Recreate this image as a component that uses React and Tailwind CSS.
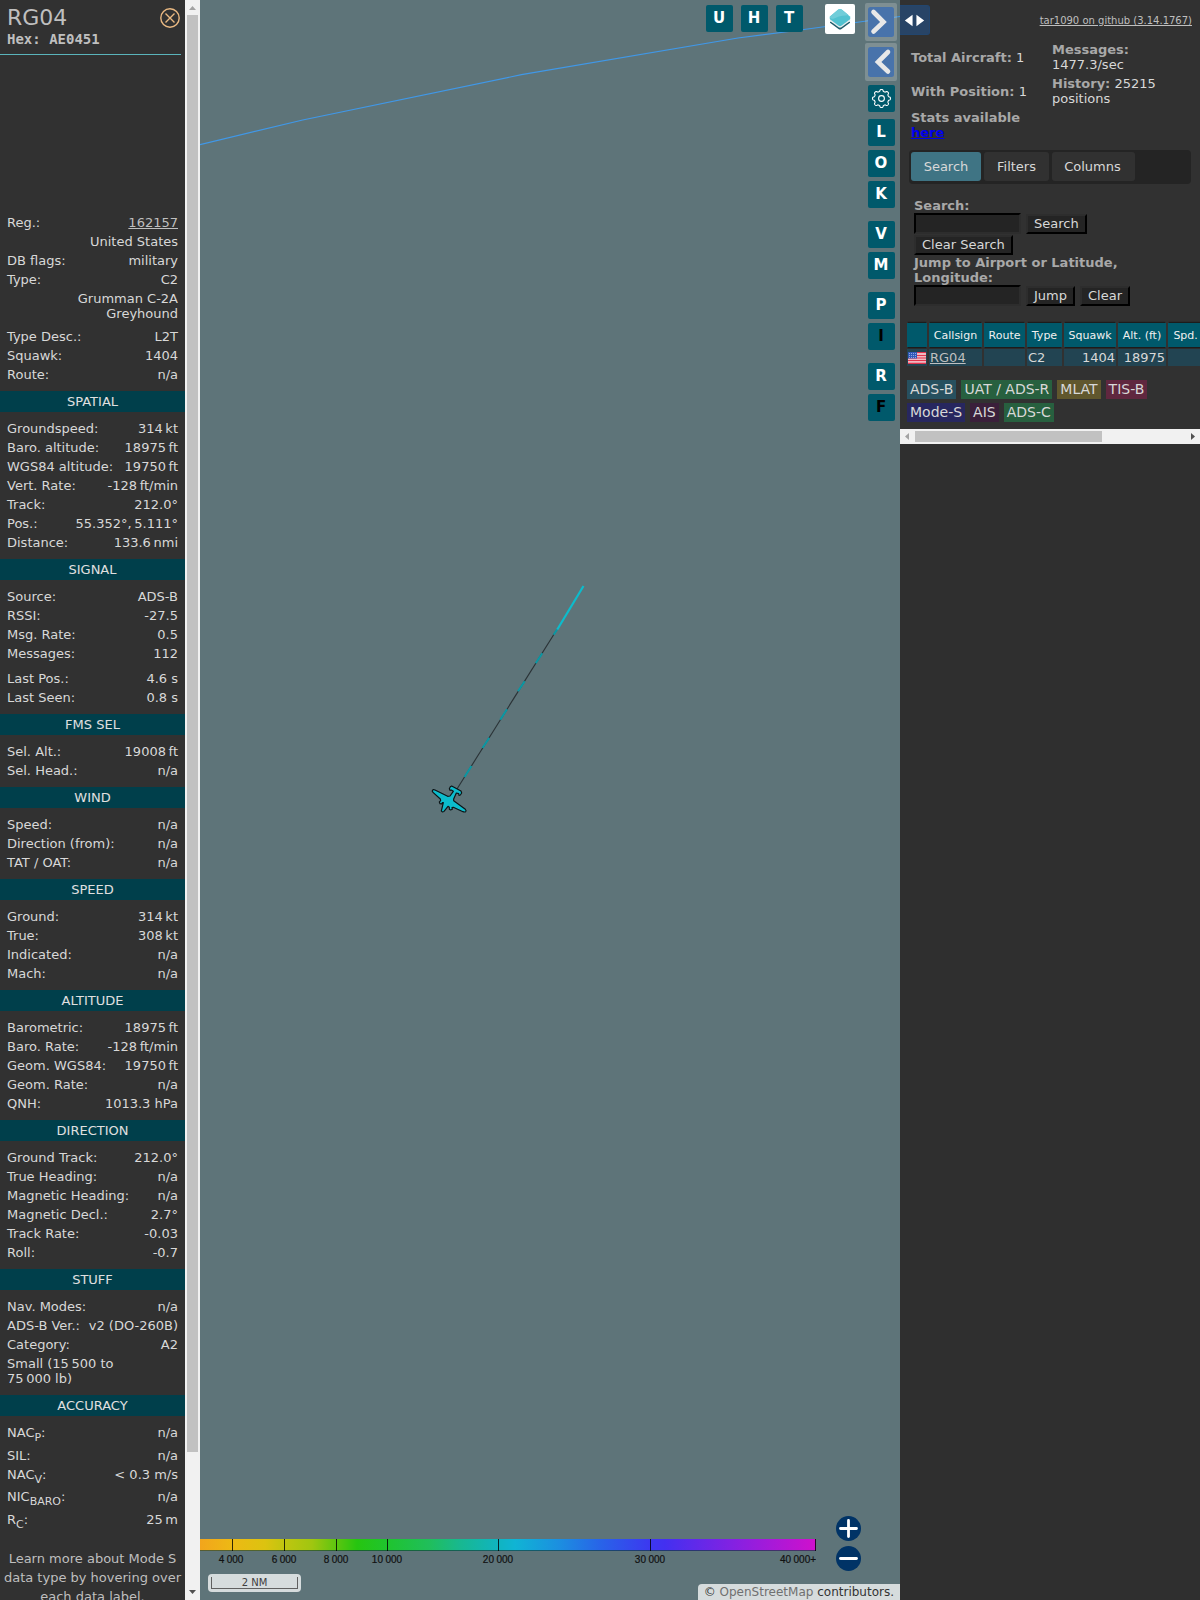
import React from "react";

const N = "\u202f";

const SUMMARY = [
  { label: "Reg.:", value: "162157", link: true },
  { label: "", value: "United States" },
  { label: "DB flags:", value: "military" },
  { label: "Type:", value: "C2" },
  { label: "", value: "Grumman C-2A Greyhound", wide: true },
  { label: "Type Desc.:", value: "L2T" },
  { label: "Squawk:", value: "1404" },
  { label: "Route:", value: "n/a" },
];

const SECTIONS = [
  ["SPATIAL", [
    ["Groundspeed:", `314${N}kt`],
    ["Baro. altitude:", `18975${N}ft`],
    ["WGS84 altitude:", `19750${N}ft`],
    ["Vert. Rate:", `-128${N}ft/min`],
    ["Track:", "212.0°"],
    ["Pos.:", `55.352°,${N}5.111°`],
    ["Distance:", `133.6${N}nmi`],
  ]],
  ["SIGNAL", [
    ["Source:", "ADS-B"],
    ["RSSI:", "-27.5"],
    ["Msg. Rate:", "0.5"],
    ["Messages:", "112"],
    null,
    ["Last Pos.:", "4.6 s"],
    ["Last Seen:", "0.8 s"],
  ]],
  ["FMS SEL", [
    ["Sel. Alt.:", `19008${N}ft`],
    ["Sel. Head.:", "n/a"],
  ]],
  ["WIND", [
    ["Speed:", "n/a"],
    ["Direction (from):", "n/a"],
    ["TAT / OAT:", "n/a"],
  ]],
  ["SPEED", [
    ["Ground:", `314${N}kt`],
    ["True:", `308${N}kt`],
    ["Indicated:", "n/a"],
    ["Mach:", "n/a"],
  ]],
  ["ALTITUDE", [
    ["Barometric:", `18975${N}ft`],
    ["Baro. Rate:", `-128${N}ft/min`],
    ["Geom. WGS84:", `19750${N}ft`],
    ["Geom. Rate:", "n/a"],
    ["QNH:", "1013.3 hPa"],
  ]],
  ["DIRECTION", [
    ["Ground Track:", "212.0°"],
    ["True Heading:", "n/a"],
    ["Magnetic Heading:", "n/a"],
    ["Magnetic Decl.:", "2.7°"],
    ["Track Rate:", "-0.03"],
    ["Roll:", "-0.7"],
  ]],
  ["STUFF", [
    ["Nav. Modes:", "n/a"],
    ["ADS-B Ver.:", "v2 (DO-260B)"],
    ["Category:", "A2"],
    [`Small (15${N}500 to 75${N}000 lb)`, ""],
  ]],
];

const ACCURACY = [
  ["NAC", "P", "n/a", "h-[23px]"],
  ["SIL", "", "n/a", "h-[19px]"],
  ["NAC", "V", "< 0.3 m/s", "h-[22px]"],
  ["NIC", "BARO", "n/a", "h-[23px]"],
  ["R", "C", `25${N}m`, "h-[23px]"],
];

function Section({ title, children }) {
  return (
    <section>
      <h2 className="h-[21px] bg-[#003f4b] text-center leading-[21px] text-[#e0e0e0]">{title}</h2>
      <div className="px-[7px] py-[7px]">{children}</div>
    </section>
  );
}

function Row({ label, value }) {
  return (
    <div className="flex justify-between py-[2px] leading-[15px]">
      <span className={value ? "whitespace-nowrap" : "w-[120px]"}>{label}</span>
      {value && <span className="whitespace-nowrap text-right">{value}</span>}
    </div>
  );
}

function AircraftPanel() {
  return (
    <aside className="flex w-[200px] shrink-0 text-[13px] text-[#d8d8d8]">
      <div className="flex min-w-0 flex-1 flex-col overflow-hidden bg-[#313131]">
        <header className="mr-1 flex h-[55px] shrink-0 justify-between border-b border-[#5ab4bb] pl-[7px] pr-px text-[#bfbfbf]">
          <div className="pt-1">
            <h1 className="text-[22px] leading-[28px]">RG04</h1>
            <div className="font-['DejaVu_Sans_Mono',monospace] text-sm font-bold leading-[14px]">Hex: AE0451</div>
          </div>
          <button aria-label="Close" className="mt-2 h-5 w-5">
            <svg viewBox="0 0 20 20" className="h-5 w-5" fill="none" stroke="#eab982" strokeWidth="1.4">
              <circle cx="10" cy="10" r="9.2" />
              <path d="M5.5 5.5l9 9M14.5 5.5l-9 9" />
            </svg>
          </button>
        </header>
        <div className="px-[7px] pb-[7px] pt-[158px]">
          {SUMMARY.map((r) => (
            <div key={r.value} className={r.wide ? "mb-1 flex justify-end py-[2px] leading-[15px]" : "flex justify-between py-[2px] leading-[15px]"}>
              <span>{r.label}</span>
              {r.link ? (
                <a href="#reg" className="underline text-[#bfbfbf]">{r.value}</a>
              ) : (
                <span className={r.wide ? "w-[110px] text-right" : ""}>{r.value}</span>
              )}
            </div>
          ))}
        </div>
        {SECTIONS.map(([title, rows]) => (
          <Section key={title} title={title}>
            {rows.map((r, i) => (r ? <Row key={i} label={r[0]} value={r[1]} /> : <div key={i} className="h-[6px]" />))}
          </Section>
        ))}
        <Section title="ACCURACY">
          {ACCURACY.map(([name, sub, value, height]) => (
            <div key={name + sub} className={`flex justify-between py-[2px] leading-[15px] ${height}`}>
              <span>
                {name}
                {sub && <sub className="-bottom-1 text-[11px]">{sub}</sub>}:
              </span>
              <span>{value}</span>
            </div>
          ))}
        </Section>
        <p className="mt-[9px] whitespace-nowrap text-center leading-[19px] text-[#bfbfbf]">
          Learn more about Mode S<br />data type by hovering over<br />each data label.
        </p>
      </div>
      <div className="flex w-[15px] flex-col items-center bg-[#f1f1f1]">
        <svg viewBox="0 0 15 15" className="h-[15px] w-[15px]"><path d="M4 10h7L7.500 6z" fill="#a3a3a3" /></svg>
        <div className="w-[11px] flex-1 pb-[133px]"><div className="h-full bg-[#c1c1c1]" /></div>
        <svg viewBox="0 0 15 15" className="h-[15px] w-[15px]"><path d="M4 5h7L7.500 9z" fill="#505050" /></svg>
      </div>
    </aside>
  );
}

function LetterButton({ children, dark }) {
  return (
    <button className={`flex h-[27px] w-[27px] items-center justify-center rounded-[2px] bg-[#00596b] pr-px text-[15px] font-bold leading-none ${dark ? "text-black" : "text-white"}`}>
      {children}
    </button>
  );
}

function ToggleButton({ label, d }) {
  return (
    <button aria-label={label} className="flex h-[38px] w-8 items-center justify-center rounded-[2px] bg-white/20">
      <svg viewBox="0 0 26 30" className="h-[30px] w-[26px]">
        <rect width="26" height="30" rx="2.500" fill="#4873ab" />
        <path d={d} fill="none" stroke="#e8e8e8" strokeWidth="4.600" strokeLinecap="round" />
      </svg>
    </button>
  );
}

const gearPath = (() => {
  const pts = [];
  for (let i = 0; i <= 160; i++) {
    const a = (i / 160) * Math.PI * 2;
    const r = 8.1 + 0.9 * Math.tanh(2.2 * Math.cos(8 * a));
    pts.push(`${(13.5 + r * Math.sin(a)).toFixed(2)} ${(13.5 - r * Math.cos(a)).toFixed(2)}`);
  }
  return `M${pts.join("L")}Z`;
})();

const GROUPS = [["L", "O", "K"], ["V", "M"], ["P", "I"], ["R", "F"]];

const TICKS = [
  [32, "4\u2005000", 31],
  [84, "6\u2005000", 84],
  [136, "8\u2005000", 136],
  [187, "10\u2005000", 187],
  [298, "20\u2005000", 298],
  [450, "30\u2005000", 450],
  [615, "40\u2005000+", 598],
];

const STOPS = [
  [0, "#f2a51c"], [32, "#edb914"], [65, "#dcc310"], [84, "#c0c510"], [112, "#a0c610"], [136, "#5ec510"],
  [157, "#26c510"], [187, "#1fc42e"], [230, "#20be5c"], [260, "#18b890"], [298, "#10b4c0"], [315, "#10b4d4"],
  [360, "#1c8ee0"], [400, "#2864e8"], [450, "#3c38f0"], [465, "#4330f0"], [540, "#8a20e0"], [616, "#d010cc"],
];

function Legend() {
  return (
    <svg viewBox="0 0 616 28" className="h-7 w-[616px]" role="img" aria-label="Altitude legend">
      <defs>
        <linearGradient id="alt">
          {STOPS.map(([x, c]) => <stop key={x} offset={x / 616} stopColor={c} />)}
        </linearGradient>
      </defs>
      <rect width="616" height="12" fill="url(#alt)" />
      <path d="M0 11.500H616" stroke="#143c3c" strokeOpacity=".7" />
      {TICKS.map(([x, label, tx]) => (
        <g key={x}>
          <path d={`M${x + 0.5} 0V12`} stroke="#000" strokeOpacity=".8" />
          <text x={tx} y="24" textAnchor="middle" fontSize="10" fontFamily="Liberation Sans, sans-serif" fill="#111" stroke="#111" strokeWidth=".2">{label}</text>
        </g>
      ))}
    </svg>
  );
}

const DASHES = [[557.3, 629.3, 553.7, 634.7], [542.3, 653.3, 535.7, 663.3], [524.7, 681.3, 518, 691.3], [507, 709.3, 500.300, 719.7], [489.3, 737.7, 482.5, 748], [471.500, 766, 464.5, 777]];

function MapView() {
  return (
    <main className="relative min-w-0 flex-1 overflow-hidden bg-[#5e7479]">
      <svg viewBox="200 0 700 1600" className="absolute left-0 top-0 h-[1600px] w-[700px]" fill="none">
        <path d="M200 144.700L302.700 120L521.500 74.700L738 38L789 31.500L900 16.500" stroke="#4098e8" strokeWidth="1.200" />
        <path d="M556 631L457 789" stroke="#2a3236" strokeWidth="1.100" />
        {DASHES.map(([a, b, c, d]) => <path key={a} d={`M${a} ${b}L${c} ${d}`} stroke="#0a98a4" strokeWidth="2" />)}
        <path d="M583.500 586L557.3 629.5" stroke="#0cbccc" strokeWidth="2.200" />
        <g transform="translate(400 570) scale(.33333)">
          <path
            d="M97 662q2 -5 8 -2L143 679l7 -1L160 664l-6 -4 -4 1 -2 -5 3 -6 4 -2 28 15 2 6 -4 6 -4 1 -1 -5 -7 -2L161 687l0 5L196 718q4 4 1 7q-3 2 -8 0L160 712l-4 1 1 5 -5 2 -4 -2 0 -6 -4 -3L132 724q-5 4 -8 -1l6 -25 -3 0 -2 4 -5 -1 -2 -5 4 -4 -1 -5L99 667q-3 -2 -2 -5Z"
            fill="#0cbccc" stroke="#0c1416" strokeWidth="3.500" strokeLinejoin="round"
          />
        </g>
      </svg>

      <div className="absolute right-[45px] top-1 flex items-start gap-[22px]">
        <div className="flex gap-2 pt-px">
          <LetterButton>U</LetterButton>
          <LetterButton>H</LetterButton>
          <LetterButton>T</LetterButton>
        </div>
        <button aria-label="Layers" className="h-[30px] w-[30px] rounded-[2px] bg-white">
          <svg viewBox="0 0 30 30" className="h-[30px] w-[30px]">
            <path d="M5 17.500v1.300l8.500 6.200q1.500 1 3 0l8.500-6.200v-1.300l-10 4z" fill="#1e5c6a" />
            <path d="M4.800 14v2.800l8.700 6.400q1.500.9 3 0l8.700-6.400V14z" fill="#e4ecee" />
            <path d="M5.300 12.300L13.300 5.500q1.700-1.200 3.400 0L24.700 12.300q1.500 1.700 0 3.300l-8 6q-1.700 1.200-3.400 0L5.300 15.600q-1.500-1.600 0-3.300z" fill="#52c2d0" />
            <path d="M5.300 12.300L13.300 5.500q1.700-1.200 3.400 0L23.500 11q-3 .5-6 .7T9 14.500q-3 .6-4.200-.8 0-.7.5-1.400z" fill="#70cdd9" />
          </svg>
        </button>
      </div>

      <div className="absolute right-[3px] top-[3px] flex flex-col items-center gap-[2px]">
        <ToggleButton label="Expand" d="M5.500 5L15.500 15L5.500 24.500" />
        <ToggleButton label="Collapse" d="M20 5L10 15L20 24.500" />
      </div>
      <div className="absolute right-[5px] top-[85px] flex flex-col gap-[7px]">
        <button aria-label="Settings" className="block h-[27px] w-[27px] rounded-[2px] bg-[#00596b]">
          <svg viewBox="0 0 27 27" className="h-[27px] w-[27px]" fill="none" stroke="#fff" strokeWidth="1.100">
            <path d={gearPath} />
            <circle cx="13.5" cy="13.5" r="2.900" />
          </svg>
        </button>
        <div className="flex flex-col gap-[13px]">
          {GROUPS.map((g) => (
            <div key={g[0]} className="flex flex-col gap-1">
              {g.map((c) => <LetterButton key={c} dark={c === "I" || c === "F"}>{c}</LetterButton>)}
            </div>
          ))}
        </div>
      </div>

      <div className="absolute bottom-[33px] left-0"><Legend /></div>
      <div className="absolute bottom-2 left-2 h-[18px] w-[93px] rounded bg-white/75 p-[3px]">
        <div className="h-3 border border-t-0 border-[#606060] text-center text-[10px] leading-3 text-[#404040]">2 NM</div>
      </div>
      <div className="absolute bottom-[29px] right-[39px] flex flex-col gap-[5px]">
        <button aria-label="Zoom in">
          <svg viewBox="0 0 25 25" className="block h-[25px] w-[25px]"><circle cx="12.5" cy="12.5" r="12.5" fill="#003366" /><path d="M4.500 12.500h16M12.500 4.500v16" stroke="#fff" strokeWidth="2.800" strokeLinecap="round" /></svg>
        </button>
        <button aria-label="Zoom out">
          <svg viewBox="0 0 25 25" className="block h-[25px] w-[25px]"><circle cx="12.5" cy="12.5" r="12.5" fill="#003366" /><path d="M4.500 12.500h16" stroke="#fff" strokeWidth="2.800" strokeLinecap="round" /></svg>
        </button>
      </div>
      <div className="absolute bottom-0 right-0 rounded-tl bg-white/75 px-[6px] text-[12px] leading-4 text-[#333]">
        © <a href="#osm" className="text-[#707070]">OpenStreetMap</a> contributors.
      </div>
    </main>
  );
}

const SMALL_BTN = "h-5 border-2 border-b-black border-l-[#2d2d2d] border-r-black border-t-[#2d2d2d] bg-[#242424] px-[6px] leading-4 text-[#d8d8d8]";
const FIELD = "h-[21px] w-[107px] border-2 border-b-[#2d2d2d] border-l-black border-r-[#2d2d2d] border-t-black bg-[#242424] px-1";

const COLS = [
  ["", "w-5"], ["Callsign", "w-[53px]"], ["Route", "w-[41px]"], ["Type", "w-[35px]"],
  ["Squawk", "w-[52px]"], ["Alt. (ft)", "w-[48px]"], ["Spd. (kt)", "w-[58px]"],
];

const SOURCES = [
  ["ADS-B", "bg-[#27505f]"], ["UAT / ADS-R", "bg-[#27603f]"], ["MLAT", "bg-[#60572d]"], ["TIS-B", "bg-[#60273f]"],
  ["Mode-S", "bg-[#27275f]"], ["AIS", "bg-[#3a1f3a]"], ["ADS-C", "bg-[#27603f]"],
];

function Flag() {
  return (
    <svg viewBox="0 0 18 12" className="ml-px block h-3 w-[18px]" role="img" aria-label="United States">
      <rect width="18" height="12" fill="#f0b8c0" />
      <path d="M0 .5h18M0 3.500h18M0 6h18M0 8.500h18M0 11.300h18" stroke="#e0344e" strokeWidth="1.200" />
      <rect width="9" height="6.500" fill="#3058b8" />
      <path d="M1 1.500h8M1 3.500h8M1 5.500h8" stroke="#a8bce8" strokeWidth=".8" strokeDasharray="1 1" />
    </svg>
  );
}

function InfoPanel() {
  const b = "font-bold text-[#a8a8a8]";
  return (
    <aside className="relative w-[300px] shrink-0 bg-[#2f2f2f] text-[13px] leading-[15px] text-[#d8d8d8]">
      <button aria-label="Resize" className="absolute left-0 top-[5px] h-[30px] w-[30px] rounded-r-[3px] border border-l-0 border-[#22466f] bg-[#284466]">
        <svg viewBox="0 0 30 28" className="h-7 w-[29px]" fill="#fff"><path d="M13 8.500v12L5 14.500zM17 8.500v12l8-6z" /></svg>
      </button>
      <div className="h-[429px] overflow-hidden bg-[#313131]">
        <div className="flex justify-end pr-2 pt-[13px]">
          <a href="#github" className="text-[10px] text-[#bfbfbf] underline">tar1090 on github (3.14.1767)</a>
        </div>
        <div className="mt-[14px] flex pl-[11px]">
          <div className="w-[141px]">
            <div className="h-[34px] pt-2"><span className={b}>Total Aircraft:</span> 1</div>
            <div className="h-[34px] pt-2"><span className={b}>With Position:</span> 1</div>
            <div className={b}>Stats available<br /><a href="#stats" className="text-[#0000ee] underline">here</a></div>
          </div>
          <div className="w-[115px]">
            <div className="h-[34px]"><span className={b}>Messages:</span><br />1477.3/sec</div>
            <div className="h-[34px]"><span className={b}>History:</span> 25215 positions</div>
          </div>
        </div>
        <div className="ml-[9px] mr-[9px] mt-[10px] flex h-[34px] items-center gap-[3px] rounded bg-[#242424] pb-px pl-[2px]">
          <button className="h-[29px] w-[70px] rounded-[3px] bg-[#3f7484]">Search</button>
          <button className="h-[29px] w-[65px] rounded-[3px] bg-[#313131]">Filters</button>
          <button className="h-[29px] w-[83px] rounded-[3px] bg-[#313131] pr-[2px]">Columns</button>
        </div>
        <div className="ml-[14px] mr-8 mt-[14px]">
          <label htmlFor="q" className={`${b} block`}>Search:</label>
          <div className="flex flex-wrap items-center gap-x-[5px] gap-y-px">
            <input id="q" type="text" className={FIELD} />
            <button className={SMALL_BTN}>Search</button>
            <button className={SMALL_BTN}>Clear Search</button>
          </div>
          <label htmlFor="j" className={`${b} block`}>Jump to Airport or Latitude, Longitude:</label>
          <div className="flex items-center gap-x-[5px]">
            <input id="j" type="text" className={FIELD} />
            <button className={SMALL_BTN}>Jump</button>
            <button className={SMALL_BTN}>Clear</button>
          </div>
        </div>
        <table className="ml-[5px] mt-[15px] w-[323px] table-fixed border-separate border-spacing-[2px]">
          <thead>
            <tr>
              {COLS.map(([name, w]) => (
                <th key={name} scope="col" className={`${w} h-6 whitespace-nowrap bg-[#00596b] p-0 text-[11px] font-normal text-[#f0f0f0] shadow-[0_2px_1px_-1px_#1c1c1c,0_-2px_1px_-1px_#1c1c1c]`}>{name}</th>
              ))}
            </tr>
          </thead>
          <tbody>
            <tr className="[&>td]:h-[17px] [&>td]:bg-[#224452] [&>td]:p-0">
              <td><Flag /></td>
              <td><a href="#rg04" className="pl-px text-[#bfbfbf] underline">RG04</a></td>
              <td />
              <td><span className="pl-px">C2</span></td>
              <td className="text-right"><span className="pr-px">1404</span></td>
              <td className="text-right"><span className="pr-px">18975</span></td>
              <td className="text-right"><span className="pr-px">314</span></td>
            </tr>
          </tbody>
        </table>
        <div className="ml-[7px] mr-9 mt-3 flex flex-wrap gap-x-[5px] gap-y-1 text-sm leading-[19px]">
          {SOURCES.map(([name, bg]) => <span key={name} className={`${bg} px-[3px]`}>{name}</span>)}
        </div>
      </div>
      <div className="flex h-[15px] items-center bg-[#f1f1f1]">
        <svg viewBox="0 0 15 15" className="h-[15px] w-[15px]"><path d="M9 4v7L5 7.500z" fill="#a3a3a3" /></svg>
        <div className="h-[11px] flex-1 pr-[83px]"><div className="h-full bg-[#c1c1c1]" /></div>
        <svg viewBox="0 0 15 15" className="h-[15px] w-[15px]"><path d="M6 4v7l4-3.500z" fill="#505050" /></svg>
      </div>
    </aside>
  );
}

export default function App() {
  return (
    <div className="flex h-screen overflow-hidden bg-[#2f2f2f] font-['DejaVu_Sans',sans-serif]">
      <AircraftPanel />
      <MapView />
      <InfoPanel />
    </div>
  );
}
